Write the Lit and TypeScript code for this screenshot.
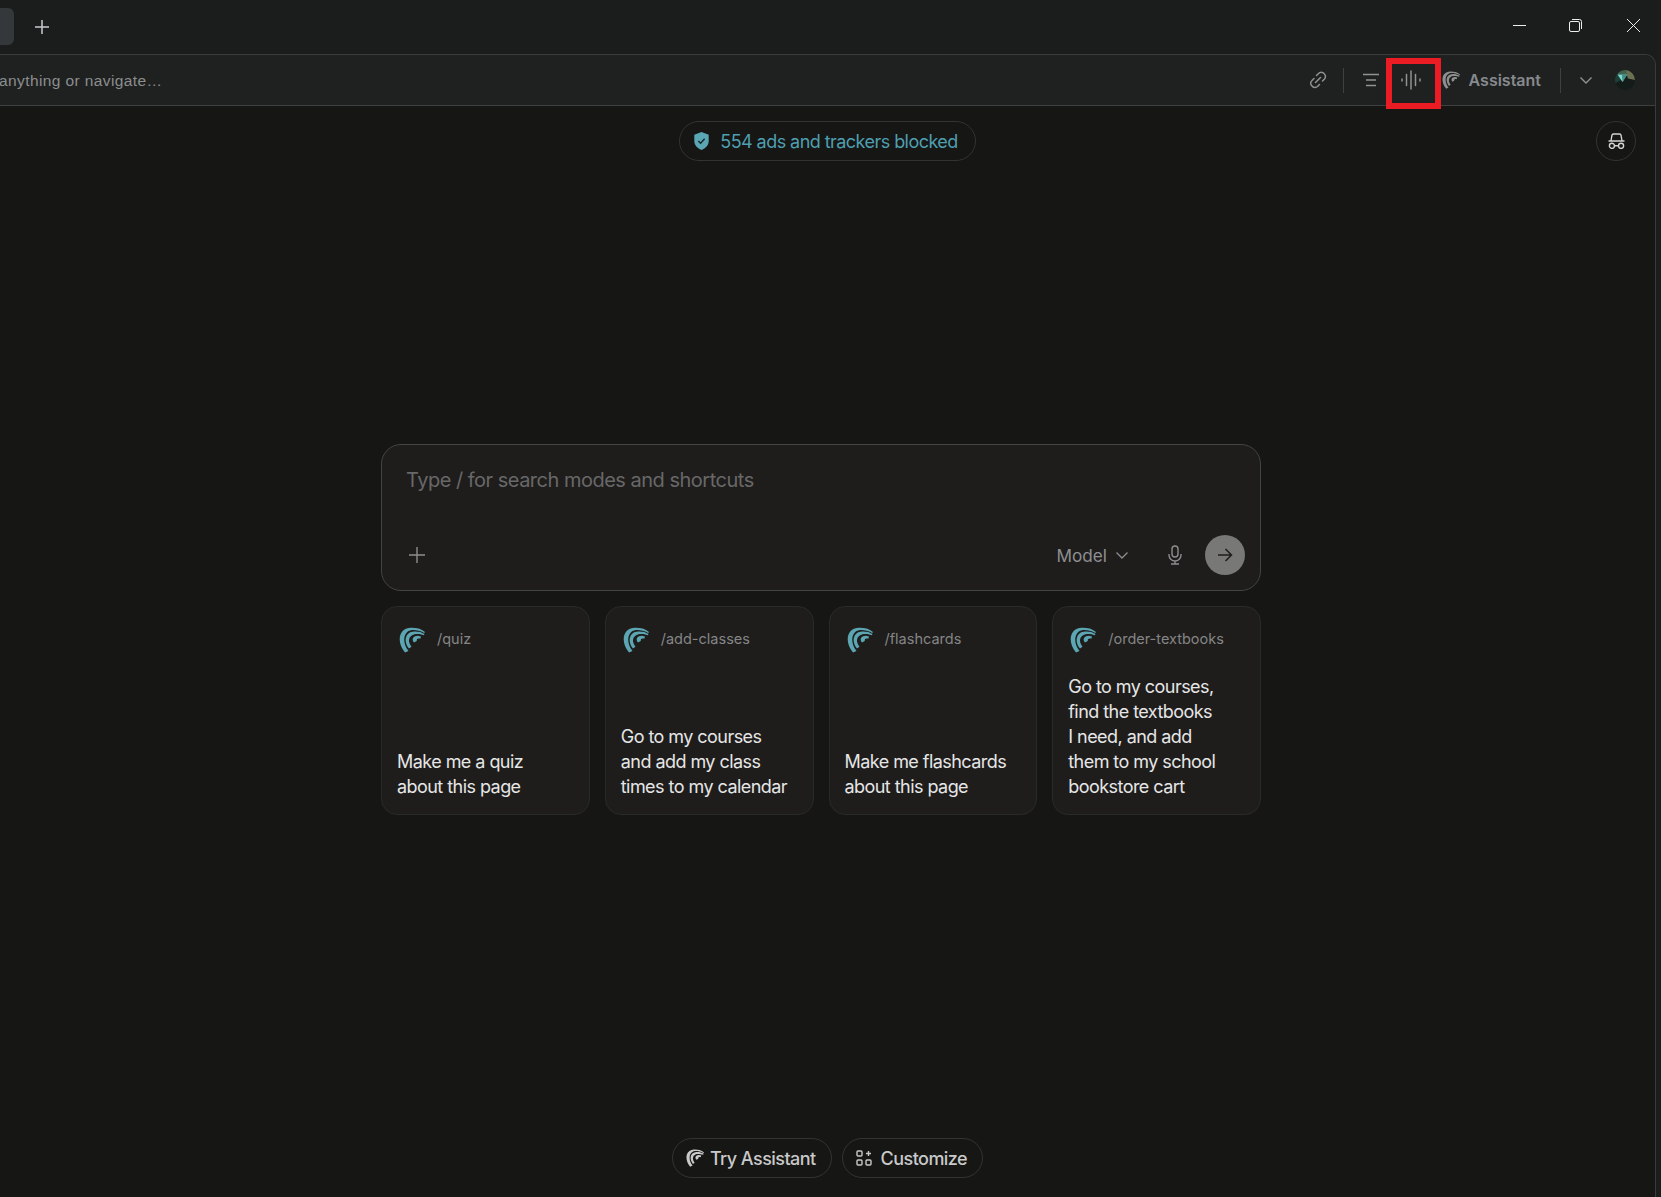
import { LitElement, css, html, svg } from "lit";
import { customElement } from "lit/decorators.js";

const logo = (cls: string) => html`
  <svg class=${cls} viewBox="0 0 26 26" fill="currentColor">
    <path d="M6 25.500C-2.500 16 -1 1 12 .8C17 .7 22 1.500 26 5L25.200 6C21 3.500 17 2.800 13 3C4 4 2.800 16 9.500 24Z"/>
    <path d="M10 21.500C4 14 6.500 5 15 4.500C19 4.300 22.500 5 25.500 7L24.800 8.300C21.500 7 18 6.800 15.500 7.300C10 8.500 8 14 12.500 19.800Z"/>
    <path d="M15 15.500C12 12 14.500 8.800 19 8.800L22 9.500L21.300 11.800C19.500 11 17.300 11.500 17.800 14Z"/>
  </svg>
`;

const CARDS = [
  { cmd: "/quiz", lines: ["Make me a quiz", "about this page"] },
  { cmd: "/add-classes", lines: ["Go to my courses", "and add my class", "times to my calendar"] },
  { cmd: "/flashcards", lines: ["Make me flashcards", "about this page"] },
  { cmd: "/order-textbooks", lines: ["Go to my courses,", "find the textbooks", "I need, and add", "them to my school", "bookstore cart"] },
];

const line = (d: string) => svg`<path d=${d}/>`;

@customElement("app-root")
export class AppRoot extends LitElement {
  static styles = css`
    :host {
      display: block;
      height: 100vh;
      background: #1b1d1d;
      color: #e6e6e6;
      font-family: Inter, "Liberation Sans", sans-serif;
      overflow: hidden;
      position: relative;
    }

    svg { display: block; flex: none; }

    #window { display: flex; flex-direction: column; height: 100%; }

    /* title bar */
    #titlebar { height: 54px; display: flex; align-items: center; flex: none; }
    #tab-stub {
      width: 14px;
      height: 37px;
      margin-bottom: 1px;
      background: #34383a;
      border-radius: 0 6px 6px 0;
    }
    #new-tab { margin-left: 21px; width: 14px; height: 14px; color: #c9cbcb; }
    #controls { margin: 0 0 3px auto; display: flex; align-items: center; padding-right: 20px; gap: 43px; color: #eceded; }
    #controls svg { width: 15px; height: 15px; }
    #controls svg:first-child { margin-right: -2px; }

    /* panel */
    #panel {
      flex: 1;
      margin-right: 5px;
      display: flex;
      flex-direction: column;
      border: 1px solid #3a3c3c;
      border-left: 0;
      border-bottom: 0;
      border-top-right-radius: 11px;
      background: #161615;
      overflow: hidden;
    }

    #toolbar {
      height: 50px;
      flex: none;
      display: flex;
      align-items: center;
      background: #1f2121;
      border-bottom: 1px solid #3e4040;
      color: #909292;
    }
    #address {
      margin-left: -1px;
      padding-top: 1px;
      font-family: "Liberation Sans", sans-serif;
      font-size: 15.5px;
      letter-spacing: .4px;
      color: #8c8e8e;
    }
    #actions { margin-left: auto; display: flex; align-items: center; padding-right: 20px; }
    .divider { width: 1px; height: 25px; background: #3e4040; }
    #link { width: 18px; height: 18px; margin-right: 16px; }
    #list { width: 16px; height: 14px; margin-left: 19px; }
    #wave { width: 22px; height: 20px; margin-left: 21px; }
    .logo-small { width: 18px; height: 18px; }
    #actions .logo-small { margin-left: 20px; color: #8d8f8f; }
    #assistant { margin-left: 9px; font-size: 16px; font-weight: 600; color: #878a8d; }
    #actions .divider.second { margin-left: 19px; }
    #chev { width: 14px; height: 9px; margin-left: 18px; }
    #avatar { width: 20px; height: 20px; margin-left: 22px; }

    /* content */
    #content { flex: 1; min-height: 0; display: flex; flex-direction: column; }
    #top {
      display: grid;
      grid-template-columns: 1fr auto 1fr;
      align-items: center;
      padding: 15px 19px 0;
    }
    #blocked {
      grid-column: 2;
      height: 40px;
      box-sizing: border-box;
      display: flex;
      align-items: center;
      gap: 10px;
      padding: 0 17px 0 13px;
      border: 1px solid #323333;
      border-radius: 20px;
      color: #4f9fb0;
      font-size: 18px;
      letter-spacing: -.55px;
    }
    #blocked svg { width: 17px; height: 18px; }
    #incognito {
      grid-column: 3;
      justify-self: end;
      width: 40px;
      height: 40px;
      box-sizing: border-box;
      display: flex;
      align-items: center;
      justify-content: center;
      border: 1px solid #323333;
      border-radius: 50%;
      color: #d4d4d4;
    }
    #incognito svg { width: 17px; height: 16px; }

    #center {
      width: 880px;
      margin: 283px 0 0 381px;
      display: flex;
      flex-direction: column;
      gap: 15px;
    }
    #composer {
      height: 147px;
      box-sizing: border-box;
      display: flex;
      flex-direction: column;
      justify-content: space-between;
      padding: 23px 15px 15px 25px;
      background: #1e1d1c;
      border: 1px solid #444;
      border-radius: 20px;
    }
    #placeholder { margin-left: -1px; font-size: 20px; line-height: 24px; color: #686868; letter-spacing: -.5px; }
    #composer-row { display: flex; align-items: center; height: 40px; color: #8d8d8d; }
    #attach { width: 18px; height: 18px; margin-left: 1px; }
    #model { margin-left: auto; font-size: 17.2px; color: #8d8f92; }
    #model-chev { width: 14px; height: 9px; margin: 0 -1px 0 8px; }
    #mic { width: 18px; height: 20px; margin-left: 38px; }
    #send {
      width: 40px;
      height: 40px;
      margin-left: 21px;
      border-radius: 50%;
      background: #787877;
      display: flex;
      align-items: center;
      justify-content: center;
      color: #1e1d1c;
    }
    #send svg { width: 16px; height: 14px; }

    #cards { display: grid; grid-template-columns: repeat(4, 1fr); gap: 15px; }
    .card {
      height: 209px;
      box-sizing: border-box;
      display: flex;
      flex-direction: column;
      justify-content: space-between;
      padding: 20px 12px 15px 15px;
      background: #1e1d1c;
      border: 1px solid #2a2a29;
      border-radius: 16px;
    }
    .card-head { display: flex; align-items: center; gap: 12px; padding-left: 2px; }
    .logo-card { width: 26px; height: 26px; color: #5ba6b2; }
    .cmd { margin-bottom: 4px; font-size: 14.5px; color: #858585; }
    .text { font-size: 18px; line-height: 25px; color: #e6e6e6; letter-spacing: -.55px; }

    #spacer { flex: 1; }
    #bottom { display: flex; justify-content: center; gap: 10px; padding-bottom: 19px; }
    .chip {
      height: 40px;
      box-sizing: border-box;
      display: flex;
      align-items: center;
      gap: 6px;
      padding: 0 15px 0 13px;
      border: 1px solid #323333;
      border-radius: 20px;
      font-size: 18px;
      font-weight: 500;
      color: #c9c9c9;
      letter-spacing: -.55px;
    }
    .chip svg { color: #c9c9c9; }
    #grid-icon { width: 16px; height: 16px; margin-right: 3px; }

    /* red marker drawn over the screenshot */
    #marker {
      position: absolute;
      left: 1386px;
      top: 58px;
      width: 55px;
      height: 51px;
      box-sizing: border-box;
      border: 6px solid #ec1c24;
    }
  `;

  render() {
    return html`
      <div id="window">
        <div id="titlebar">
          <div id="tab-stub"></div>
          <svg id="new-tab" viewBox="0 0 14 14" stroke="currentColor" stroke-width="1.500"><path d="M7 0v14M0 7h14"/></svg>
          <div id="controls">
            <svg viewBox="0 0 15 15" stroke="currentColor" fill="none"><path d="M1 7.500h13"/></svg>
            <svg viewBox="0 0 15 15" stroke="currentColor" fill="none"><rect x="1.500" y="3.500" width="10" height="10" rx="1.500"/><path d="M4 1.500h7.500a2 2 0 0 1 2 2V11"/></svg>
            <svg viewBox="0 0 15 15" stroke="currentColor" fill="none"><path d="M1 1l13 13M14 1L1 14"/></svg>
          </div>
        </div>
        <div id="panel">
          <div id="toolbar">
            <span id="address">anything or navigate…</span>
            <div id="actions">
              <svg id="link" viewBox="0 0 18 18" fill="none" stroke="currentColor" stroke-width="1.500" stroke-linecap="round">
                <path d="M7.500 4.500l2-2a3.500 3.500 0 0 1 5.500 0 3.800 3.800 0 0 1 .5 5.500l-2 2"/>
                <path d="M10.500 13.500l-2 2a3.800 3.800 0 0 1-5.500-.5 3.500 3.500 0 0 1 0-5.500l2-2"/>
                <path d="M6.500 11.500l5-5"/>
              </svg>
              <div class="divider"></div>
              <svg id="list" viewBox="0 0 16 14" stroke="currentColor" stroke-width="1.500" fill="none"><path d="M0 1.500h16M3 7h10M3 12.500h10"/></svg>
              <svg id="wave" viewBox="0 0 22 20" stroke="currentColor" stroke-width="1.500" stroke-linecap="round" fill="none">
                ${["M2 9v2", "M6.500 4.500v11", "M11 1v18", "M15.500 4.500v11", "M20 9v2"].map(line)}
              </svg>
              ${logo("logo-small")}
              <span id="assistant">Assistant</span>
              <div class="divider second"></div>
              <svg id="chev" viewBox="0 0 14 9" fill="none" stroke="currentColor" stroke-width="1.400"><path d="M1.500 1.500L7 7l5.500-5.500"/></svg>
              <svg id="avatar" viewBox="0 0 20 20">
                <circle cx="10" cy="10" r="10" fill="#141c1a"/>
                <path d="M.5 13A10 10 0 0 1 3 3l5 6z" fill="#1e3f38"/>
                <path d="M10 0a10 10 0 0 1 10 10l-7-1.500z" fill="#6b7050"/>
                <path d="M3 3a10 10 0 0 1 7-3l2 4.500H3z" fill="#3f6350"/>
                <path d="M2.500 4.500h9.500l-4.500 7.500z" fill="#7fd6cc"/>
                <path d="M7 5h5l-4.500 7z" fill="#3f8f88"/>
              </svg>
            </div>
          </div>
          <div id="content">
            <div id="top">
              <div id="blocked">
                <svg viewBox="0 0 18 20"><path d="M9 0l8 3v7c0 5-3.500 8-8 10-4.500-2-8-5-8-10V3z" fill="#5aa6b3"/><path d="M5.500 10l2.500 2.500 4.500-5" fill="none" stroke="#14282c" stroke-width="1.600"/></svg>
                554 ads and trackers blocked
              </div>
              <div id="incognito">
                <svg viewBox="0 0 16 15" fill="none" stroke="currentColor" stroke-width="1.300">
                  <path d="M2.800 7.500l.9-5.300a1.500 1.500 0 0 1 1.500-1.300h5.600a1.500 1.500 0 0 1 1.500 1.300l.9 5.300"/>
                  <path d="M.5 7.500h15"/>
                  <circle cx="3.700" cy="12" r="2.400"/><circle cx="12.300" cy="12" r="2.400"/>
                  <path d="M6.100 12h3.800"/>
                </svg>
              </div>
            </div>
            <div id="center">
              <div id="composer">
                <div id="placeholder">Type / for search modes and shortcuts</div>
                <div id="composer-row">
                  <svg id="attach" viewBox="0 0 18 18" stroke="currentColor" stroke-width="1.400"><path d="M9 1v16M1 9h16"/></svg>
                  <span id="model">Model</span>
                  <svg id="model-chev" viewBox="0 0 14 9" fill="none" stroke="currentColor" stroke-width="1.300"><path d="M1.500 1.500L7 7l5.500-5.500"/></svg>
                  <svg id="mic" viewBox="0 0 18 20" fill="none" stroke="currentColor" stroke-width="1.400">
                    <rect x="6" y="1" width="6" height="11" rx="3"/>
                    <path d="M3 9v1a6 6 0 0 0 12 0V9M9 16v3M5 19h8"/>
                  </svg>
                  <div id="send">
                    <svg viewBox="0 0 16 14" fill="none" stroke="currentColor" stroke-width="1.500"><path d="M1 7h13M8.500 1l6 6-6 6"/></svg>
                  </div>
                </div>
              </div>
              <div id="cards">
                ${CARDS.map(
                  (card) => html`
                    <div class="card">
                      <div class="card-head">${logo("logo-card")}<span class="cmd">${card.cmd}</span></div>
                      <div class="text">${card.lines.map((l) => html`<div>${l}</div>`)}</div>
                    </div>
                  `
                )}
              </div>
            </div>
            <div id="spacer"></div>
            <div id="bottom">
              <div class="chip">${logo("logo-small")}Try Assistant</div>
              <div class="chip">
                <svg id="grid-icon" viewBox="0 0 16 16" fill="none" stroke="currentColor" stroke-width="1.400">
                  <rect x="1" y="1" width="5" height="5" rx="1"/><rect x="1" y="10" width="5" height="5" rx="1"/><rect x="10" y="10" width="5" height="5" rx="1"/>
                  <path d="M12.500 1v5M10 3.500h5"/>
                </svg>
                Customize
              </div>
            </div>
          </div>
        </div>
      </div>
      <div id="marker"></div>
    `;
  }
}
